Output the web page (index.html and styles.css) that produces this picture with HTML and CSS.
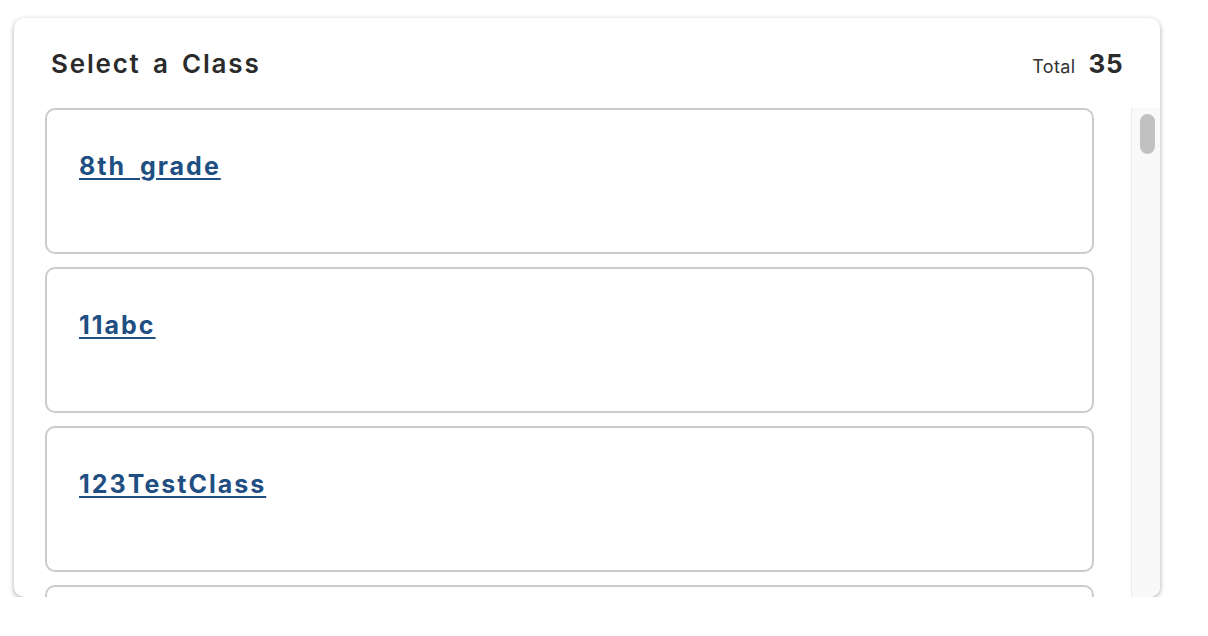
FILE: index.html
```html
<!DOCTYPE html>
<html>
<head>
<meta charset="utf-8">
<link rel="stylesheet" href="styles.css">
</head>
<body>
<div class="card">
  <div class="card-header">
    <h1 class="title">Select a Class</h1>
    <div class="total"><span class="total-label">Total</span><span class="total-num">35</span></div>
  </div>
  <div class="card-body">
    <div class="list">
      <div class="item"><a class="item-link" href="#">8th grade</a></div>
      <div class="item"><a class="item-link" href="#">11abc</a></div>
      <div class="item"><a class="item-link" href="#">123TestClass</a></div>
      <div class="item"></div>
    </div>
    <div class="scrollbar"><div class="thumb"></div></div>
  </div>
</div>
</body>
</html>
```
FILE: styles.css
```css
html, body { margin: 0; padding: 0; background: #fff; }
body { font-family: "Inter", "Noto Sans", sans-serif; color: #2b2b2b; }
.card {
  margin: 18px 0 0 14px;
  width: 1146px;
  height: 579px;
  border-radius: 10px;
  background: #fff;
  box-shadow: 0 2px 5px rgba(0,0,0,0.28), 0 0 6px rgba(0,0,0,0.06);
  overflow: hidden;
  display: flex;
  flex-direction: column;
}
.card-header {
  height: 90px;
  flex: none;
  padding: 0 37px;
  display: flex;
  align-items: center;
  justify-content: space-between;
}
.title {
  margin: 0;
  font-size: 26px;
  font-weight: 600;
  letter-spacing: 1.8px;
  word-spacing: 4px;
  color: #2b2b2b;
}
.total { display: flex; align-items: baseline; gap: 13px; }
.total-label { font-size: 18px; color: #333; letter-spacing: 0.4px; }
.total-num { font-size: 26px; font-weight: 700; color: #2b2b2b; letter-spacing: 0.5px; }
.card-body { flex: 1; min-height: 0; display: flex; }
.list {
  flex: 1;
  overflow: hidden;
  padding: 0 37px 0 31px;
  display: flex;
  flex-direction: column;
  gap: 13px;
}
.item {
  flex: none;
  height: 142px;
  border: 2px solid #c9cccf;
  border-radius: 10px;
  padding: 0 32px;
  box-sizing: content-box;
}
.item-link {
  display: inline-block;
  margin-top: 41px;
  font-size: 25px;
  line-height: 30px;
  font-weight: 700;
  letter-spacing: 2px;
  word-spacing: 6px;
  color: #1f4f82;
  text-decoration: underline;
  text-decoration-thickness: 2px;
  text-underline-offset: 3px;
}
.scrollbar {
  width: 29px;
  flex: none;
  background: #f9f9f9;
  border-left: 1px solid #ececec;
  padding: 6px 6px 0 8px;
  box-sizing: border-box;
}
.thumb {
  width: 15px;
  height: 40px;
  border-radius: 8px;
  background: #c1c1c1;
}
```
